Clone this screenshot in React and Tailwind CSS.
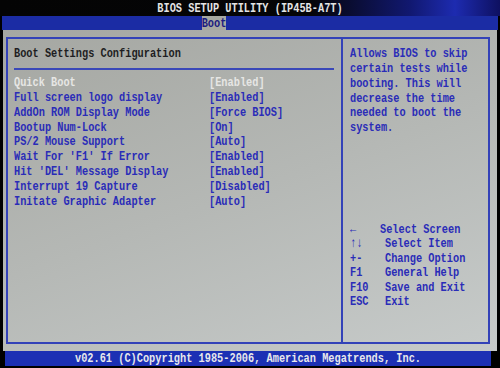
import React from 'react';

const rows = [
    { label: 'Quick Boot', value: '[Enabled]', active: true },
    { label: 'Full screen logo display', value: '[Enabled]' },
    { label: 'AddOn ROM Display Mode', value: '[Force BIOS]' },
    { label: 'Bootup Num-Lock', value: '[On]' },
    { label: 'PS/2 Mouse Support', value: '[Auto]' },
    { label: "Wait For 'F1' If Error", value: '[Enabled]' },
    { label: "Hit 'DEL' Message Display", value: '[Enabled]' },
    { label: 'Interrupt 19 Capture', value: '[Disabled]' },
    { label: 'Initate Graphic Adapter', value: '[Auto]' },
];

const help = [
    'Allows BIOS to skip',
    'certain tests while',
    'booting. This will',
    'decrease the time',
    'needed to boot the',
    'system.',
];

const keys = [
    { key: '←', desc: 'Select Screen', w: 'w-[30px]' },
    { key: '↑↓', desc: 'Select Item', w: 'w-[35px]' },
    { key: '+-', desc: 'Change Option', w: 'w-[35px]' },
    { key: 'F1', desc: 'General Help', w: 'w-[35px]' },
    { key: 'F10', desc: 'Save and Exit', w: 'w-[35px]' },
    { key: 'ESC', desc: 'Exit', w: 'w-[35px]' },
];

const T = ({ children, className = '' }) => (
    <span className={'inline-block scale-y-130 whitespace-pre ' + className}>{children}</span>
);

const App = () => {
    return (
        <div
            className="w-[500px] h-[368px] bg-black flex flex-col overflow-hidden font-bold text-[10.3px] leading-none"
            style={{ fontFamily: '"Liberation Mono", "DejaVu Sans Mono", monospace' }}
        >
            {/* Title */}
            <div className="h-[16px] flex items-center justify-center text-[#e4e4e4] bg-[linear-gradient(90deg,#040404_0%,#050507_62%,#111870_82%,#1d2bb0_91%,#0e1060_100%)]">
                <T>BIOS SETUP UTILITY (IP45B-A7T)</T>
            </div>

            {/* Tab bar */}
            <div className="h-[14px] ml-[2px] mr-[2px] flex bg-[#1b2ca4]">
                <div className="ml-[200px] w-[24px] h-full bg-[#a7a8a1] text-[#1c1c80] flex items-center justify-center">
                    <T>Boot</T>
                </div>
            </div>

            {/* Main */}
            <div className="h-[321px] mx-[3px] pt-[7px] pl-[3px] pr-[7px] pb-[7px] bg-[linear-gradient(160deg,#a5a7a2_0%,#b5b8b5_50%,#c7cbca_100%)]">
                <div className="h-full border-2 border-[#3342b8] flex">
                    {/* Left panel */}
                    <div className="w-[335px] border-r-2 border-[#3342b8] pt-[7px] pl-[6px] pr-[7px]">
                        <div className="h-[15px] flex items-center text-[#1e1e22]">
                            <T>Boot Settings Configuration</T>
                        </div>
                        <div className="mt-[7px] h-[2px] bg-[#3a48b8]" />
                        <div className="mt-[5px] flex flex-col">
                            {rows.map((r) => (
                                <div
                                    key={r.label}
                                    className={'h-[14.8px] flex items-center ' + (r.active ? 'text-[#e6e6e4]' : 'text-[#2a2cb8]')}
                                >
                                    <div className="w-[195px]">
                                        <T>{r.label}</T>
                                    </div>
                                    <T>{r.value}</T>
                                </div>
                            ))}
                        </div>
                    </div>

                    {/* Right panel */}
                    <div className="flex-1 pt-[7px] pl-[7px] text-[#2a2cb8]">
                        <div className="flex flex-col">
                            {help.map((h) => (
                                <div key={h} className="h-[14.8px] flex items-center">
                                    <T>{h}</T>
                                </div>
                            ))}
                        </div>
                        <div className="mt-[87px] flex flex-col">
                            {keys.map((k) => (
                                <div key={k.key} className="h-[14.5px] flex items-center">
                                    <div className={k.w}>
                                        <T>{k.key}</T>
                                    </div>
                                    <T>{k.desc}</T>
                                </div>
                            ))}
                        </div>
                    </div>
                </div>
            </div>

            {/* Footer */}
            <div className="h-[15px] ml-[5px] w-[486px] bg-[#1c30b4] text-[#e8e8ec] flex items-center justify-center">
                <T>v02.61 (C)Copyright 1985-2006, American Megatrends, Inc.</T>
            </div>
        </div>
    );
};

export default App;
